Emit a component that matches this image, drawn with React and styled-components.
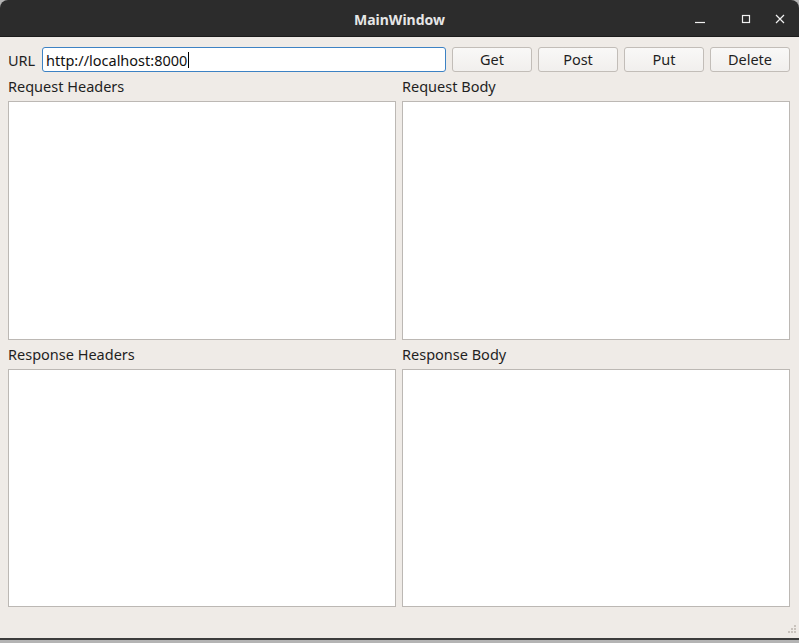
import styled, { createGlobalStyle } from "styled-components"

const GlobalStyle = createGlobalStyle`
  html, body {
    margin: 0;
    padding: 0;
    background: #b4b4b4;
  }
  * { box-sizing: border-box; }
`;

const Window = styled.div`
  width: 799px;
  height: 640px;
  display: flex;
  flex-direction: column;
  font-family: "Noto Sans", "DejaVu Sans", sans-serif;
  font-size: 14.5px;
  color: #1f1f1f;
`;

const TitleBar = styled.div`
  height: 37px;
  flex-shrink: 0;
  background: #2c2c2c;
  border-radius: 8px 8px 0 0;
  border-bottom: 1px solid #1c1c1c;
  position: relative;
  display: flex;
  align-items: center;
  justify-content: center;
  padding-top: 2px;
`;

const Title = styled.span`
  color: #e6e6e6;
  font-weight: 700;
  font-size: 14px;
`;

const Controls = styled.div`
  position: absolute;
  right: 2px;
  top: 0;
  height: 100%;
  display: flex;
  align-items: center;
`;

const Control = styled.div`
  width: ${(p) => p.$w || 34}px;
  height: 100%;
  display: flex;
  align-items: center;
  justify-content: center;
  padding-top: 2px;
`;

const Body = styled.div`
  flex: 1;
  background: #efebe7;
  padding: 10px 9px 0 8px;
  display: flex;
  flex-direction: column;
  position: relative;
  border-bottom: 2px solid #3c3c3c;
`;

const UrlRow = styled.div`
  display: flex;
  align-items: center;
  height: 25px;
`;

const UrlLabel = styled.label`
  width: 34px;
  flex-shrink: 0;
`;

const UrlInput = styled.div`
  width: 404px;
  height: 25px;
  background: #fff;
  border: 1px solid #3d82c4;
  border-radius: 3px;
  display: flex;
  align-items: center;
  padding-left: 3px;
  color: #111;
`;

const Caret = styled.span`
  display: inline-block;
  width: 1px;
  height: 16px;
  background: #000;
  margin-left: 1px;
`;

const Button = styled.button`
  width: 80px;
  height: 25px;
  margin-left: 6px;
  border: 1px solid #c2bdb8;
  border-radius: 3px;
  background: linear-gradient(#f9f8f7, #f1efed);
  font-family: inherit;
  font-size: 14.5px;
  color: #1f1f1f;
  padding: 0 0 2px;
`;

const Grid = styled.div`
  display: grid;
  grid-template-columns: 388px 388px;
  column-gap: 6px;
  grid-template-rows: 29px 239px 29px 238px;
`;

const SectionLabel = styled.div`
  display: flex;
  align-items: center;
  padding-bottom: 1px;
`;

const TextBox = styled.div`
  background: #fff;
  border: 1px solid #bcb8b4;
`;

const Grip = styled.svg`
  position: absolute;
  right: 3px;
  bottom: 3px;
`;

export default function App() {
  return (
    <Window>
      <GlobalStyle />
      <TitleBar>
        <Title>MainWindow</Title>
        <Controls>
          <Control $w={58}>
            <svg width="12" height="12" viewBox="0 0 12 12">
              <line x1="1" y1="9.5" x2="11" y2="9.5" stroke="#f0f0f0" strokeWidth="1.2" />
            </svg>
          </Control>
          <Control>
            <svg width="12" height="12" viewBox="0 0 12 12">
              <rect x="2.5" y="2.5" width="7" height="7" fill="none" stroke="#f0f0f0" strokeWidth="1.2" />
            </svg>
          </Control>
          <Control>
            <svg width="12" height="12" viewBox="0 0 12 12">
              <path d="M2 2 L10 10 M10 2 L2 10" stroke="#f0f0f0" strokeWidth="1.2" />
            </svg>
          </Control>
        </Controls>
      </TitleBar>
      <Body>
        <UrlRow>
          <UrlLabel>URL</UrlLabel>
          <UrlInput>
            http://localhost:8000<Caret />
          </UrlInput>
          <Button>Get</Button>
          <Button>Post</Button>
          <Button>Put</Button>
          <Button>Delete</Button>
        </UrlRow>
        <Grid>
          <SectionLabel>Request Headers</SectionLabel>
          <SectionLabel>Request Body</SectionLabel>
          <TextBox />
          <TextBox />
          <SectionLabel>Response Headers</SectionLabel>
          <SectionLabel>Response Body</SectionLabel>
          <TextBox />
          <TextBox />
        </Grid>
        <Grip width="10" height="10" viewBox="0 0 10 10">
          {[[8, 0], [5, 3], [8, 3], [2, 6], [5, 6], [8, 6]].map(([x, y]) => (
            <rect key={`${x}-${y}`} x={x} y={y} width="2" height="2" fill="#c9c3bd" />
          ))}
        </Grip>
      </Body>
    </Window>
  )
}
